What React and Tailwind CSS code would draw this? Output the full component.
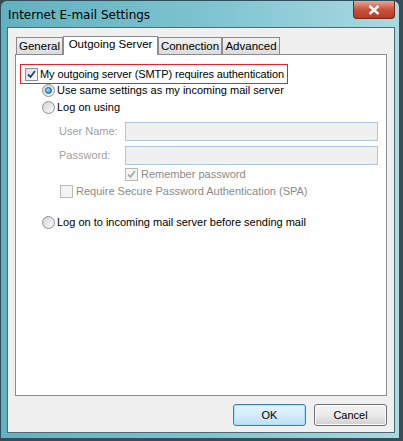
import React from "react";

const font = { fontFamily: "'Liberation Sans', Arial, sans-serif" };

const Check = ({ checked, disabled }) => (
  <span
    className={`flex h-[13px] w-[13px] shrink-0 items-center justify-center border ${
      disabled ? "border-[#b8b8b8] bg-[#f4f4f4]" : "border-[#8e8f8f] bg-gradient-to-br from-[#dcdcdc] to-[#ffffff]"
    }`}
  >
    {checked && (
      <svg width="9" height="9" viewBox="0 0 9 9">
        <path
          d="M1 4.5 L3.5 7 L8 1"
          fill="none"
          stroke={disabled ? "#aaaaaa" : "#1c3f94"}
          strokeWidth="1.8"
        />
      </svg>
    )}
  </span>
);

const Radio = ({ checked }) => (
  <span className="flex h-[13px] w-[13px] shrink-0 items-center justify-center rounded-full border border-[#8e8f8f] bg-gradient-to-br from-[#d4d4d4] to-[#fbfbfb]">
    {checked && (
      <span className="h-[7px] w-[7px] rounded-full border border-[#1a5e8c] bg-[radial-gradient(circle_at_35%_35%,#9fe3ff,#1b7fc4)]" />
    )}
  </span>
);

const Tab = ({ label, active, w }) => (
  <div
    className={
      active
        ? `relative z-10 -mb-px flex h-[19px] items-center justify-center border border-b-0 border-[#898c95] bg-white pb-[2px] text-[11.5px] text-black ${w}`
        : `flex h-[17px] items-center justify-center border border-b-0 border-[#898c95] bg-gradient-to-b from-[#f2f2f2] to-[#dcdcdc] pt-[1px] text-[11.5px] text-black ${w}`
    }
  >
    {label}
  </div>
);

const Button = ({ label, focused }) => (
  <button
    className={`flex h-[22px] w-[73px] items-center justify-center rounded-[3px] border text-[11px] text-black ${
      focused
        ? "border-[#3c7fb1] bg-gradient-to-b from-[#e5f4fc] via-[#d4ecfa] to-[#bde0f5] shadow-[inset_0_0_0_1px_#a7e2f9]"
        : "border-[#707070] bg-gradient-to-b from-[#f2f2f2] via-[#ebebeb] to-[#cfcfcf] shadow-[inset_0_0_0_1px_#fcfcfc]"
    }`}
    style={font}
  >
    {label}
  </button>
);

export default function App() {
  return (
    <div className="h-[441px] w-[403px] bg-[#3b4a57]">
      <div className="flex h-[439px] w-[400px] flex-col rounded-t-[7px] border border-[#2f4f5a] bg-gradient-to-r from-[#62b1c0] via-[#7cc3cf] to-[#a9d9e1] pb-[5px] pl-[6px] pr-[4px]">
        <div className="flex h-[26px] items-start justify-between">
          <div
            className="pl-[1px] pt-[5px] text-[12px] text-black"
            style={{ fontFamily: "'Segoe UI', 'DejaVu Sans', 'Liberation Sans', sans-serif" }}
          >
            Internet E-mail Settings
          </div>
          <div className="flex h-[18px] w-[42px] items-center justify-center rounded-b-[4px] border border-t-0 border-[#6b2a22] bg-gradient-to-b from-[#e8a593] via-[#c8523b] to-[#b93a22]">
            <svg width="12" height="10" viewBox="0 0 12 10">
              <path d="M1.5 1 L10.5 9 M10.5 1 L1.5 9" stroke="#ffffff" strokeWidth="2.4" />
            </svg>
          </div>
        </div>
        <div
          className="flex flex-1 flex-col whitespace-nowrap border border-[#4d6b75] bg-[#f0f0f0] px-[7px] pt-[8px] text-[11px]"
          style={font}
        >
          <div className="flex items-end pl-[1px]">
            <Tab label="General" w="w-[47px]" />
            <Tab label="Outgoing Server" w="w-[95px]" active />
            <Tab label="Connection" w="w-[64px]" />
            <Tab label="Advanced" w="w-[58px]" />
          </div>
          <div className="h-[342px] border border-[#898c95] bg-white pl-[4px] pt-[9px]">
            <div className="flex h-[20px] w-fit items-center gap-[2px] border border-[#e8212b] pl-[4px] pr-[3px] tracking-[-0.1px]">
              <Check checked />
              <span>My outgoing server (SMTP) requires authentication</span>
            </div>
            <div className="flex flex-col pl-[22px]">
              <div className="flex h-[13px] items-center gap-[2px]">
                <Radio checked />
                <span>Use same settings as my incoming mail server</span>
              </div>
              <div className="mt-[4px] flex h-[13px] items-center gap-[2px]">
                <Radio />
                <span>Log on using</span>
              </div>
              <div className="mt-[8px] flex items-center pl-[17px] text-[#a0a0a0]">
                <span className="w-[66px]">User Name:</span>
                <div className="h-[19px] w-[253px] border border-[#afc5dc] bg-[#f0f0f0]" />
              </div>
              <div className="mt-[5px] flex items-center pl-[17px] text-[#a0a0a0]">
                <span className="w-[66px]">Password:</span>
                <div className="h-[19px] w-[253px] border border-[#afc5dc] bg-[#f0f0f0]" />
              </div>
              <div className="mt-[3px] flex h-[13px] items-center gap-[3px] pl-[83px] text-[#8a8a8a]">
                <Check checked disabled />
                <span>Remember password</span>
              </div>
              <div className="mt-[4px] flex h-[13px] items-center gap-[3px] pl-[18px] text-[#8a8a8a]">
                <Check disabled />
                <span>Require Secure Password Authentication (SPA)</span>
              </div>
              <div className="mt-[18px] flex h-[13px] items-center gap-[2px]">
                <Radio />
                <span>Log on to incoming mail server before sending mail</span>
              </div>
            </div>
          </div>
          <div className="mt-[8px] flex justify-end gap-[8px]">
            <Button label="OK" focused />
            <Button label="Cancel" />
          </div>
        </div>
      </div>
    </div>
  );
}
